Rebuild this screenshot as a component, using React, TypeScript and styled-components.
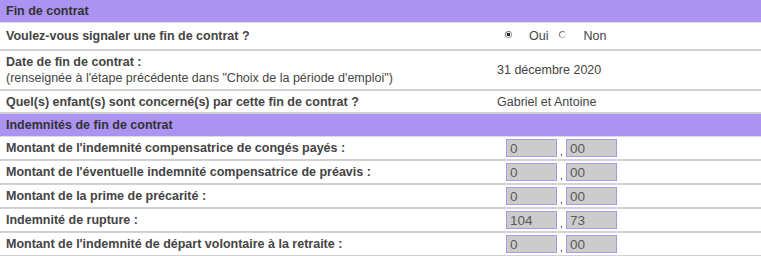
import {FC} from 'react'
import styled, {createGlobalStyle} from 'styled-components'

const GlobalStyle = createGlobalStyle`
  html, body {
    margin: 0;
    padding: 0;
    background: #ffffff;
  }
  body {
    font-family: "Liberation Sans", Arial, sans-serif;
    font-size: 12.5px;
    color: #444444;
  }
`

const amounts = [
    {label: "Montant de l'indemnité compensatrice de congés payés :", euros: '0', cents: '00'},
    {label: "Montant de l'éventuelle indemnité compensatrice de préavis :", euros: '0', cents: '00'},
    {label: 'Montant de la prime de précarité :', euros: '0', cents: '00'},
    {label: 'Indemnité de rupture :', euros: '104', cents: '73'},
    {label: "Montant de l'indemnité de départ volontaire à la retraite :", euros: '0', cents: '00'},
]

const App: FC = () => {
    return (
        <>
            <GlobalStyle/>
            <Form>
                <SectionTitle>Fin de contrat</SectionTitle>
                <Row $height={26}>
                    <Label>Voulez-vous signaler une fin de contrat ?</Label>
                    <Value $pad={15}>
                        <Radio $checked/>
                        <RadioText>Oui</RadioText>
                        <Radio/>
                        <RadioText>Non</RadioText>
                    </Value>
                </Row>
                <Row $height={38}>
                    <Label>
                        Date de fin de contrat :
                        <Hint>(renseignée à l'étape précédente dans "Choix de la période d'emploi")</Hint>
                    </Label>
                    <Value>31 décembre 2020</Value>
                </Row>
                <Row $height={21}>
                    <Label>Quel(s) enfant(s) sont concerné(s) par cette fin de contrat ?</Label>
                    <Value>Gabriel et Antoine</Value>
                </Row>
                <SectionTitle>Indemnités de fin de contrat</SectionTitle>
                {amounts.map((a) => (
                    <Row $height={22} key={a.label}>
                        <Label>{a.label}</Label>
                        <Value $pad={16}>
                            <Amount readOnly value={a.euros}/>
                            <Comma>,</Comma>
                            <Amount readOnly value={a.cents}/>
                        </Value>
                    </Row>
                ))}
            </Form>
        </>
    )
}

const Form = styled.div`
  width: 761px;
  display: flex;
  flex-direction: column;
`

const SectionTitle = styled.div`
  height: 22px;
  background: #ab93f2;
  border-bottom: 1px solid #dcdcdc;
  display: flex;
  align-items: center;
  padding-left: 6px;
  font-weight: bold;
  color: #333333;
`

const Row = styled.div<{ $height: number }>`
  min-height: ${({$height}) => $height}px;
  display: grid;
  grid-template-columns: 490px 1fr;
  align-items: center;
  border-bottom: 2px solid #d2d2d2;
`

const Label = styled.div`
  padding-left: 6px;
  font-weight: bold;
  display: flex;
  flex-direction: column;
  line-height: 16px;
`

const Hint = styled.span`
  font-weight: normal;
`

const Value = styled.div<{ $pad?: number }>`
  padding-left: ${({$pad}) => $pad ?? 7}px;
  display: flex;
  align-items: center;
`

const Radio = styled.span<{ $checked?: boolean }>`
  width: 7px;
  height: 7px;
  border-radius: 50%;
  box-sizing: border-box;
  border: 1px solid #777;
  border-right-color: ${({$checked}) => $checked ? '#999' : '#e4e4e4'};
  border-bottom-color: ${({$checked}) => $checked ? '#999' : '#bbb'};
  background: ${({$checked}) => $checked ? 'radial-gradient(circle, #222 0 1.5px, #fff 2px)' : '#fff'};
  margin-right: 17px;
  margin-bottom: 4px;
`

const RadioText = styled.span`
  margin-right: 11px;
`

const Amount = styled.input`
  width: 51px;
  height: 18px;
  box-sizing: border-box;
  border: 1px solid #ad95f0;
  background: #cccccc;
  font-family: "Liberation Sans", Arial, sans-serif;
  font-size: 13.5px;
  color: #5a5a5a;
  padding: 0 0 0 3px;
  outline: none;
`

const Comma = styled.span`
  width: 9px;
  text-align: center;
  align-self: flex-end;
  font-size: 10px;
  line-height: 10px;
`

export default App
